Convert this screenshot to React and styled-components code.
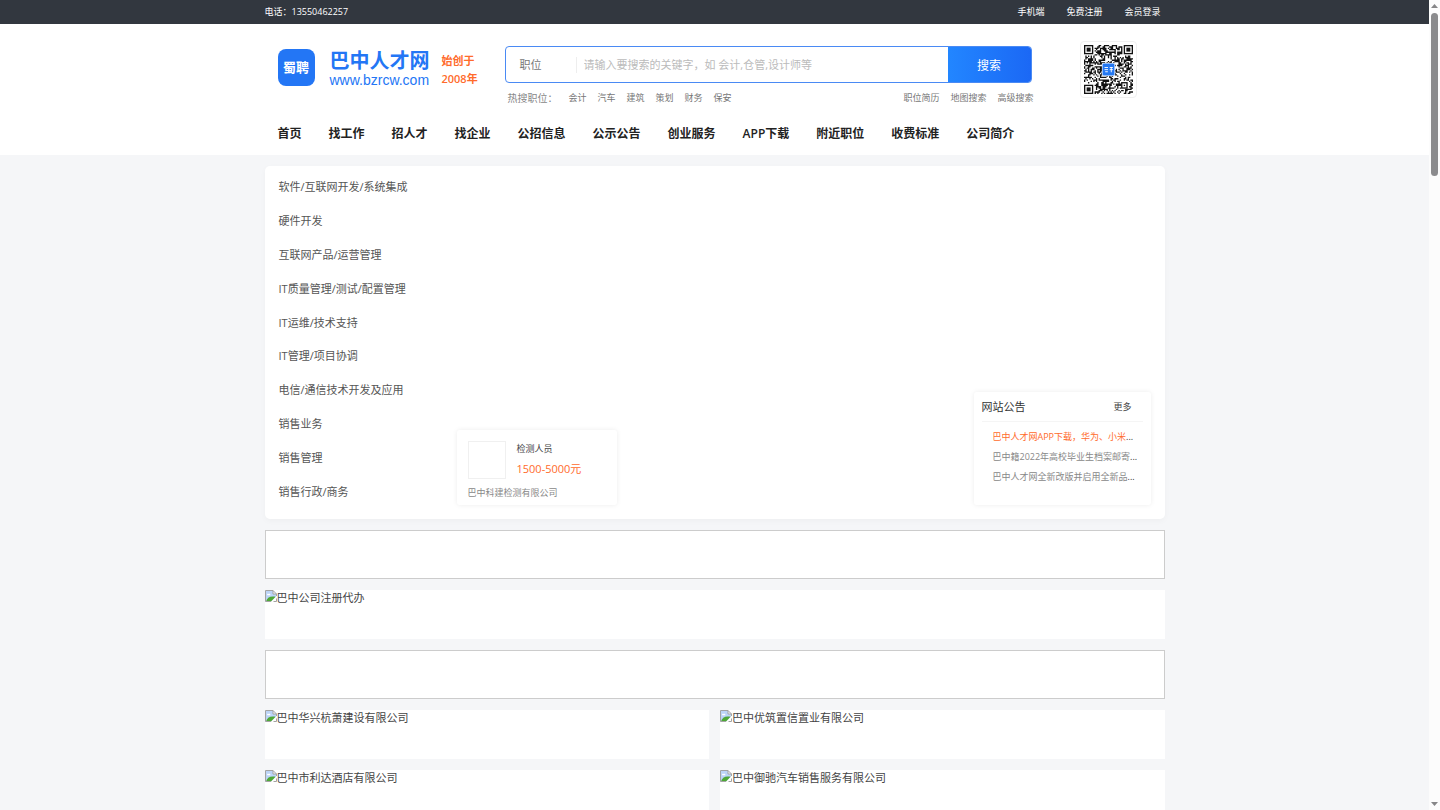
import React from "react";
import styled, { createGlobalStyle } from "styled-components";

const topLinks = ["手机端", "免费注册", "会员登录"];
const hotWords = ["会计", "汽车", "建筑", "策划", "财务", "保安"];
const searchLinks = ["职位简历", "地图搜索", "高级搜索"];
const navItems = [
  "首页",
  "找工作",
  "招人才",
  "找企业",
  "公招信息",
  "公示公告",
  "创业服务",
  "APP下载",
  "附近职位",
  "收费标准",
  "公司简介",
];
const categories = [
  "软件/互联网开发/系统集成",
  "硬件开发",
  "互联网产品/运营管理",
  "IT质量管理/测试/配置管理",
  "IT运维/技术支持",
  "IT管理/项目协调",
  "电信/通信技术开发及应用",
  "销售业务",
  "销售管理",
  "销售行政/商务",
];
const notices = [
  { text: "巴中人才网APP下载，华为、小米", hot: true },
  { text: "巴中籍2022年高校毕业生档案邮寄" },
  { text: "巴中人才网全新改版并启用全新品" },
];
const companies = [
  "巴中华兴杭萧建设有限公司",
  "巴中优筑置信置业有限公司",
  "巴中市利达酒店有限公司",
  "巴中御驰汽车销售服务有限公司",
];

const QR_SIZE = 37;

const inFinder = (x, y) =>
  (x < 8 && y < 8) || (x > QR_SIZE - 9 && y < 8) || (x < 8 && y > QR_SIZE - 9);

const buildQrPath = () => {
  let seed = 2008;
  let d = "";
  for (let y = 0; y < QR_SIZE; y++) {
    for (let x = 0; x < QR_SIZE; x++) {
      seed = (seed * 48271) % 2147483647;
      const alignment = x > 27 && x < 33 && y > 27 && y < 33;
      if (!inFinder(x, y) && !alignment && seed / 2147483647 < 0.52) {
        d += `M${x} ${y}h1v1h-1z`;
      }
    }
  }
  return d;
};

const qrPath = buildQrPath();

const QrCode = () => (
  <svg viewBox="0 0 37 37" role="img" aria-label="二维码">
    <path d={qrPath} fill="#111" />
    {[
      [0, 0],
      [30, 0],
      [0, 30],
    ].map(([x, y]) => (
      <g key={`${x}-${y}`}>
        <rect x={x + 0.5} y={y + 0.5} width="6" height="6" fill="#fff" stroke="#111" />
        <rect x={x + 2} y={y + 2} width="3" height="3" fill="#111" />
      </g>
    ))}
    <rect x="28.5" y="28.5" width="4" height="4" fill="#fff" stroke="#111" />
    <rect x="30" y="30" width="1" height="1" fill="#111" />
    <rect x="13.5" y="13.5" width="10" height="10" rx="1" fill="#fff" />
    <rect x="14" y="14" width="9" height="9" rx="1" fill="#2478f2" />
    <path
      d="M15.5 17h2.6M15.5 18.6h2.6M16 20.2h2M19.4 17h2.4M19.4 18.6h2.4M20.6 16.6v4"
      stroke="#fff"
      strokeWidth="0.7"
    />
  </svg>
);

const BrokenImage = () => (
  <svg width="12" height="12" viewBox="0 0 12 12" aria-hidden="true">
    <path d="M0.5 0.5H8L11.5 4V6L6 11.5H0.5Z" fill="#bcd4f7" />
    <path d="M2 4.8c0-1.2 1.2-1.5 1.7-.8.9-.6 1.9.1 1.7 1.2H2.3z" fill="#fff" />
    <path d="M1 11.5C2 7.6 5.4 5.6 10.6 6.8L6 11.5Z" fill="#4fa836" />
    <path d="M8 0.5V4H11.5Z" fill="#fff" />
    <path d="M6 11.5H0.5V0.5H8L11.5 4V6M8 0.5V4H11.5" fill="none" stroke="#a3a3a3" />
    <path d="M8.5 11.5H11.5V8.5" fill="none" stroke="#a3a3a3" />
  </svg>
);

const App = () => (
  <Shell>
    <GlobalStyle />
    <Page>
      <TopBar>
        <TopBarContent>
          <span>电话：13550462257</span>
          <TopNav>
            {topLinks.map((item) => (
              <a key={item} href="#">
                {item}
              </a>
            ))}
          </TopNav>
        </TopBarContent>
      </TopBar>

      <Header>
        <Container>
          <HeaderMain>
            <Logo href="#">
              <LogoMark>蜀聘</LogoMark>
              <LogoName>
                <strong>巴中人才网</strong>
                <span>www.bzrcw.com</span>
              </LogoName>
              <Since>
                <span>始创于</span>
                <span>2008年</span>
              </Since>
            </Logo>
            <div>
              <SearchForm onSubmit={(e) => e.preventDefault()}>
                <SearchLabel htmlFor="keyword">职位</SearchLabel>
                <SearchInput
                  id="keyword"
                  type="text"
                  placeholder="请输入要搜索的关键字，如 会计,仓管,设计师等"
                />
                <SearchButton type="submit">搜索</SearchButton>
              </SearchForm>
              <SearchExtra>
                <LinkRow>
                  <HotTitle>热搜职位：</HotTitle>
                  {hotWords.map((item) => (
                    <a key={item} href="#">
                      {item}
                    </a>
                  ))}
                </LinkRow>
                <LinkRow>
                  {searchLinks.map((item) => (
                    <a key={item} href="#">
                      {item}
                    </a>
                  ))}
                </LinkRow>
              </SearchExtra>
            </div>
            <QrCard>
              <QrCode />
            </QrCard>
          </HeaderMain>
          <MainNav>
            {navItems.map((item) => (
              <a key={item} href="#">
                {item}
              </a>
            ))}
          </MainNav>
        </Container>
      </Header>

      <Content>
        <Panel>
          <CategoryList>
            {categories.map((item) => (
              <li key={item}>
                <a href="#">{item}</a>
              </li>
            ))}
          </CategoryList>
          <JobCard>
            <JobTop>
              <JobLogo />
              <div>
                <JobTitle>检测人员</JobTitle>
                <Salary>1500-5000元</Salary>
              </div>
            </JobTop>
            <Company href="#">巴中科建检测有限公司</Company>
          </JobCard>
          <NoticeCard>
            <NoticeHead>
              <h2>网站公告</h2>
              <a href="#">更多</a>
            </NoticeHead>
            <NoticeList>
              {notices.map((item) => (
                <li key={item.text}>
                  <NoticeLink href="#" $hot={item.hot}>
                    {item.text}
                  </NoticeLink>
                  ...
                </li>
              ))}
            </NoticeList>
          </NoticeCard>
        </Panel>

        <Banner $outlined />
        <Banner href="#">
          <BrokenImage />
          巴中公司注册代办
        </Banner>
        <Banner $outlined />
        <BannerGrid>
          {companies.map((item) => (
            <Banner key={item} href="#">
              <BrokenImage />
              {item}
            </Banner>
          ))}
        </BannerGrid>
      </Content>
    </Page>
    <ScrollRail aria-hidden="true">
      <svg width="7" height="4" viewBox="0 0 7 4">
        <path d="M3.5 0L7 4H0Z" fill="#868688" />
      </svg>
      <ScrollThumb />
      <svg width="7" height="4" viewBox="0 0 7 4">
        <path d="M3.5 4L0 0H7Z" fill="#868688" />
      </svg>
    </ScrollRail>
  </Shell>
);

export default App;

const GlobalStyle = createGlobalStyle`
  * {
    box-sizing: border-box;
  }

  body {
    margin: 0;
    background: #f5f6f8;
    color: #333;
    font-family: "Open Sans", "Noto Sans CJK SC", sans-serif;
    font-size: 9px;
    line-height: 18px;
  }

  a {
    color: inherit;
    text-decoration: none;
  }

  ul {
    list-style: none;
    margin: 0;
    padding: 0;
  }

  input,
  button {
    font-family: inherit;
  }
`;

const Shell = styled.div`
  display: grid;
  grid-template-columns: minmax(0, 1fr) 11px;
  height: 100vh;
`;

const Page = styled.div`
  overflow: hidden;
`;

const Container = styled.div`
  max-width: 900px;
  margin: 0 auto;
`;

const TopBar = styled.div`
  background: #32373f;
  color: #fff;
`;

const TopBarContent = styled(Container)`
  display: flex;
  align-items: center;
  justify-content: space-between;
  height: 24px;
`;

const TopNav = styled.nav`
  display: flex;
  gap: 22px;
  padding-right: 4px;
`;

const Header = styled.header`
  background: #fff;
`;

const HeaderMain = styled.div`
  display: grid;
  grid-template-columns: 227px minmax(0, 1fr) 57px;
  align-items: start;
  padding: 17px 28px 0 13px;
`;

const Logo = styled.a`
  display: flex;
  align-items: flex-start;
  height: 37px;
  margin-top: 8px;
`;

const LogoMark = styled.span`
  width: 37px;
  height: 37px;
  border-radius: 8px;
  background: #2376f5;
  color: #fff;
  font-size: 13px;
  font-weight: 700;
  line-height: 37px;
  text-align: center;
`;

const LogoName = styled.span`
  display: flex;
  flex-direction: column;
  margin-left: 15px;
  color: #2376f5;

  strong {
    font-size: 20px;
    line-height: 23px;
  }

  span {
    font-family: "Liberation Sans", sans-serif;
    font-size: 14px;
    line-height: 16px;
  }
`;

const Since = styled.span`
  display: flex;
  flex-direction: column;
  margin-left: 12px;
  padding-top: 3px;
  color: #ff6b2c;
  font-size: 11px;
  font-weight: 600;
`;

const SearchForm = styled.form`
  display: flex;
  align-items: center;
  height: 37px;
  margin: 5px 48px 0 0;
  border: 1px solid #4a8af4;
  border-radius: 4px;
  overflow: hidden;
  background: #fff;
`;

const SearchLabel = styled.label`
  width: 71px;
  padding-left: 14px;
  border-right: 1px solid #eee;
  color: #777;
  font-size: 11px;
  line-height: 16px;
`;

const SearchInput = styled.input`
  flex: 1;
  min-width: 0;
  padding: 0 7px;
  border: 0;
  outline: none;
  background: none;
  font-size: 11px;

  &::placeholder {
    color: #bbb;
  }
`;

const SearchButton = styled.button`
  align-self: stretch;
  width: 83px;
  padding: 0;
  border: 0;
  background: linear-gradient(90deg, #2286ff, #1b68f5);
  color: #fff;
  font-size: 12px;
`;

const SearchExtra = styled.div`
  display: flex;
  justify-content: space-between;
  margin: 6px 46px 0 3px;
  color: #777;
`;

const LinkRow = styled.div`
  display: flex;
  gap: 11px;
`;

const HotTitle = styled.span`
  color: #888;
  font-size: 10px;
`;

const QrCard = styled.div`
  height: 57px;
  padding: 3px;
  border: 1px solid #f0f0f0;
  border-radius: 4px;

  svg {
    display: block;
    width: 100%;
  }
`;

const MainNav = styled.nav`
  display: flex;
  align-items: center;
  gap: 27px;
  height: 44px;
  margin-top: 4px;
  padding: 2px 0 0 13px;
  color: #222;
  font-size: 12px;
  font-weight: 600;
  white-space: nowrap;
`;

const Content = styled(Container)`
  display: flex;
  flex-direction: column;
  gap: 11px;
  padding-top: 11px;
`;

const Panel = styled.section`
  display: flex;
  align-items: flex-end;
  height: 353px;
  padding: 4px 14px 10px;
  border-radius: 5px;
  background: #fff;
  box-shadow: 0 2px 6px rgba(0, 0, 0, 0.03);
`;

const CategoryList = styled.ul`
  display: grid;
  grid-auto-rows: 1fr;
  align-items: center;
  align-self: stretch;
  width: 178px;
  color: #555;
  font-size: 11px;
`;

const Card = styled.article`
  margin-bottom: 4px;
  border-radius: 3px;
  background: #fff;
  box-shadow: 0 0 5px rgba(0, 0, 0, 0.08);
`;

const JobCard = styled(Card)`
  width: 160px;
  padding: 11px 11px 3px;
`;

const JobTop = styled.div`
  display: flex;
  gap: 11px;
`;

const JobLogo = styled.div`
  width: 38px;
  height: 38px;
  border: 1px solid #f0f0f0;
`;

const JobTitle = styled.div`
  color: #444;
  line-height: 16px;
`;

const Salary = styled.div`
  margin-top: 4px;
  color: #ff6b2c;
  font-size: 11px;
  line-height: 16px;
`;

const Company = styled.a`
  display: block;
  margin-top: 5px;
  color: #888;
`;

const NoticeCard = styled(Card)`
  width: 177px;
  height: 113px;
  margin-left: auto;
  padding: 0 8px;
`;

const NoticeHead = styled.div`
  display: flex;
  align-items: center;
  justify-content: space-between;
  height: 30px;
  padding-right: 11px;
  border-bottom: 1px solid #f5f5f5;
  color: #444;

  h2 {
    margin: 0;
    color: #333;
    font-size: 11px;
    font-weight: 400;
  }
`;

const NoticeList = styled.ul`
  padding: 5px 0 0 11px;

  li {
    line-height: 20px;
    white-space: nowrap;
  }
`;

const NoticeLink = styled.a`
  color: ${(props) => (props.$hot ? "#ff6b2c" : "#888")};
`;

const Banner = styled.a`
  display: flex;
  height: 49px;
  border: ${(props) => (props.$outlined ? "1px solid #ccc" : "0")};
  background: #fff;
  color: #444;
  font-size: 11px;
  line-height: 16px;
`;

const BannerGrid = styled.div`
  display: grid;
  grid-template-columns: 1fr 1fr;
  gap: 11px;
`;

const ScrollRail = styled.div`
  display: flex;
  flex-direction: column;
  align-items: center;
  padding: 4px 0;
  background: #fcfcfc;
`;

const ScrollThumb = styled.div`
  width: 7px;
  height: 163px;
  margin: 5px 0 auto;
  border-radius: 4px;
  background: #8b8b8d;
`;
